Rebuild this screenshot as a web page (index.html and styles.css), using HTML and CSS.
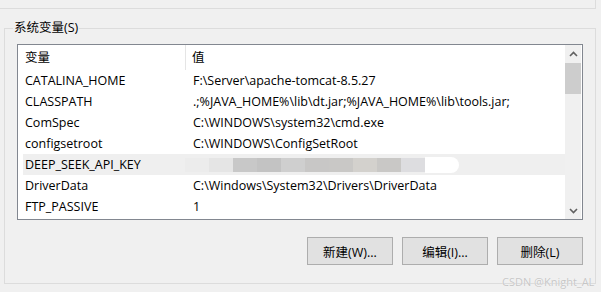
FILE: index.html
```html
<!DOCTYPE html>
<html lang="zh-CN">
<head>
    <meta charset="UTF-8">
    <title>系统变量</title>
    <link rel="stylesheet" href="styles.css">
</head>
<body>

<div class="prev-group"></div>

<fieldset class="group">
    <legend>系统变量(S)</legend>

    <div class="listbox">
        <div class="list-main">
            <div class="list-header">
                <div class="col-name">变量</div>
                <div class="col-value">值</div>
            </div>
            <div class="list-rows">
                <div class="row"><div class="col-name">CATALINA_HOME</div><div class="col-value">F:\Server\apache-tomcat-8.5.27</div></div>
                <div class="row"><div class="col-name">CLASSPATH</div><div class="col-value">.;%JAVA_HOME%\lib\dt.jar;%JAVA_HOME%\lib\tools.jar;</div></div>
                <div class="row"><div class="col-name">ComSpec</div><div class="col-value">C:\WINDOWS\system32\cmd.exe</div></div>
                <div class="row"><div class="col-name">configsetroot</div><div class="col-value">C:\WINDOWS\ConfigSetRoot</div></div>
                <div class="row selected">
                    <div class="col-name">DEEP_SEEK_API_KEY</div>
                    <div class="col-value">
                        <div class="blur">
                            <span style="background:#ececec"></span>
                            <span style="background:#e5e5e5"></span>
                            <span style="background:#c8c8c8"></span>
                            <span style="background:#c3c3c3"></span>
                            <span style="background:#cfcfcf"></span>
                            <span style="background:#c8c7c6"></span>
                            <span style="background:#c9c8c6"></span>
                            <span style="background:#d3d1cd"></span>
                            <span style="background:#c9c8c6"></span>
                            <span style="background:#dddde0"></span>
                            <span class="blur-end"></span>
                        </div>
                    </div>
                </div>
                <div class="row"><div class="col-name">DriverData</div><div class="col-value">C:\Windows\System32\Drivers\DriverData</div></div>
                <div class="row"><div class="col-name">FTP_PASSIVE</div><div class="col-value">1</div></div>
            </div>
        </div>
        <div class="scrollbar">
            <div class="scroll-btn">
                <svg width="9" height="6" viewBox="0 0 9 6"><path d="M1 5 L4.5 1.5 L8 5" fill="none" stroke="#606060" stroke-width="1.6"/></svg>
            </div>
            <div class="scroll-track">
                <div class="scroll-thumb"></div>
            </div>
            <div class="scroll-btn">
                <svg width="9" height="6" viewBox="0 0 9 6"><path d="M1 1 L4.5 4.5 L8 1" fill="none" stroke="#606060" stroke-width="1.6"/></svg>
            </div>
        </div>
    </div>

    <div class="buttons">
        <button class="btn">新建(W)...</button>
        <button class="btn">编辑(I)...</button>
        <button class="btn">删除(L)</button>
    </div>
</fieldset>

<div class="watermark">CSDN @Knight_AL</div>

</body>
</html>
```

FILE: styles.css
```css
body {
    margin: 0;
    width: 601px;
    height: 292px;
    overflow: hidden;
    background-color: #f0f0f0;
    font-family: "Open Sans", "Noto Sans CJK SC", sans-serif;
    font-size: 12.5px;
    color: #000;
    position: relative;
}
.prev-group {
    width: 595px;
    height: 8px;
    border-right: 1px solid #dcdcdc;
    border-bottom: 1px solid #dcdcdc;
}
.group {
    margin: 11px 0 0 4px;
    width: 592px;
    height: 264px;
    box-sizing: border-box;
    padding: 0 12px 0 12px;
    border: 1px solid #dcdcdc;
}
.group legend {
    margin-left: -4px;
    padding: 0 1px;
    line-height: 16px;
    color: #000;
}
.listbox {
    display: flex;
    height: 176px;
    margin-top: 8px;
    box-sizing: border-box;
    border: 1px solid #828790;
    background-color: #fff;
}
.list-main {
    flex: 1;
    overflow: hidden;
}
.list-header {
    display: flex;
    height: 25px;
    line-height: 25px;
}
.list-header .col-name {
    width: 160px;
    padding-left: 7px;
    border-right: 1px solid #e5e5e5;
}
.list-header .col-value {
    padding-left: 6px;
}
.list-rows {
    padding-left: 5px;
}
.row {
    display: flex;
    height: 21px;
    line-height: 21px;
    white-space: nowrap;
}
.row.selected {
    background-color: #efefef;
}
.row .col-name {
    width: 161px;
    flex-shrink: 0;
    padding-left: 2px;
}
.row .col-value {
    padding-left: 7px;
}
.blur {
    display: flex;
    align-items: center;
    height: 21px;
    margin-left: -8px;
}
.blur span {
    display: block;
    width: 24px;
    height: 14px;
}
.blur .blur-end {
    width: 34px;
    height: 16px;
    background: #fff;
    border-radius: 0 10px 10px 0;
}
.scrollbar {
    width: 16px;
    margin-right: 1px;
    display: flex;
    flex-direction: column;
    background-color: #f0f0f0;
}
.scroll-btn {
    height: 17px;
    display: flex;
    align-items: center;
    justify-content: center;
}
.scroll-track {
    flex: 1;
}
.scroll-thumb {
    height: 31px;
    margin-top: 1px;
    background-color: #cdcdcd;
}
.buttons {
    display: flex;
    justify-content: flex-end;
    gap: 9px;
    margin-top: 17px;
}
.btn {
    width: 86px;
    height: 28px;
    background-color: #e1e1e1;
    border: 1px solid #adadad;
    font-family: "Open Sans", "Noto Sans CJK SC", sans-serif;
    font-size: 12.5px;
    color: #000;
    padding: 0;
}
.watermark {
    position: absolute;
    left: 502px;
    top: 274px;
    font-family: "Open Sans", sans-serif;
    font-size: 11px;
    color: #c6c6c6;
    text-shadow: 0 0 1px #fff;
}
```
